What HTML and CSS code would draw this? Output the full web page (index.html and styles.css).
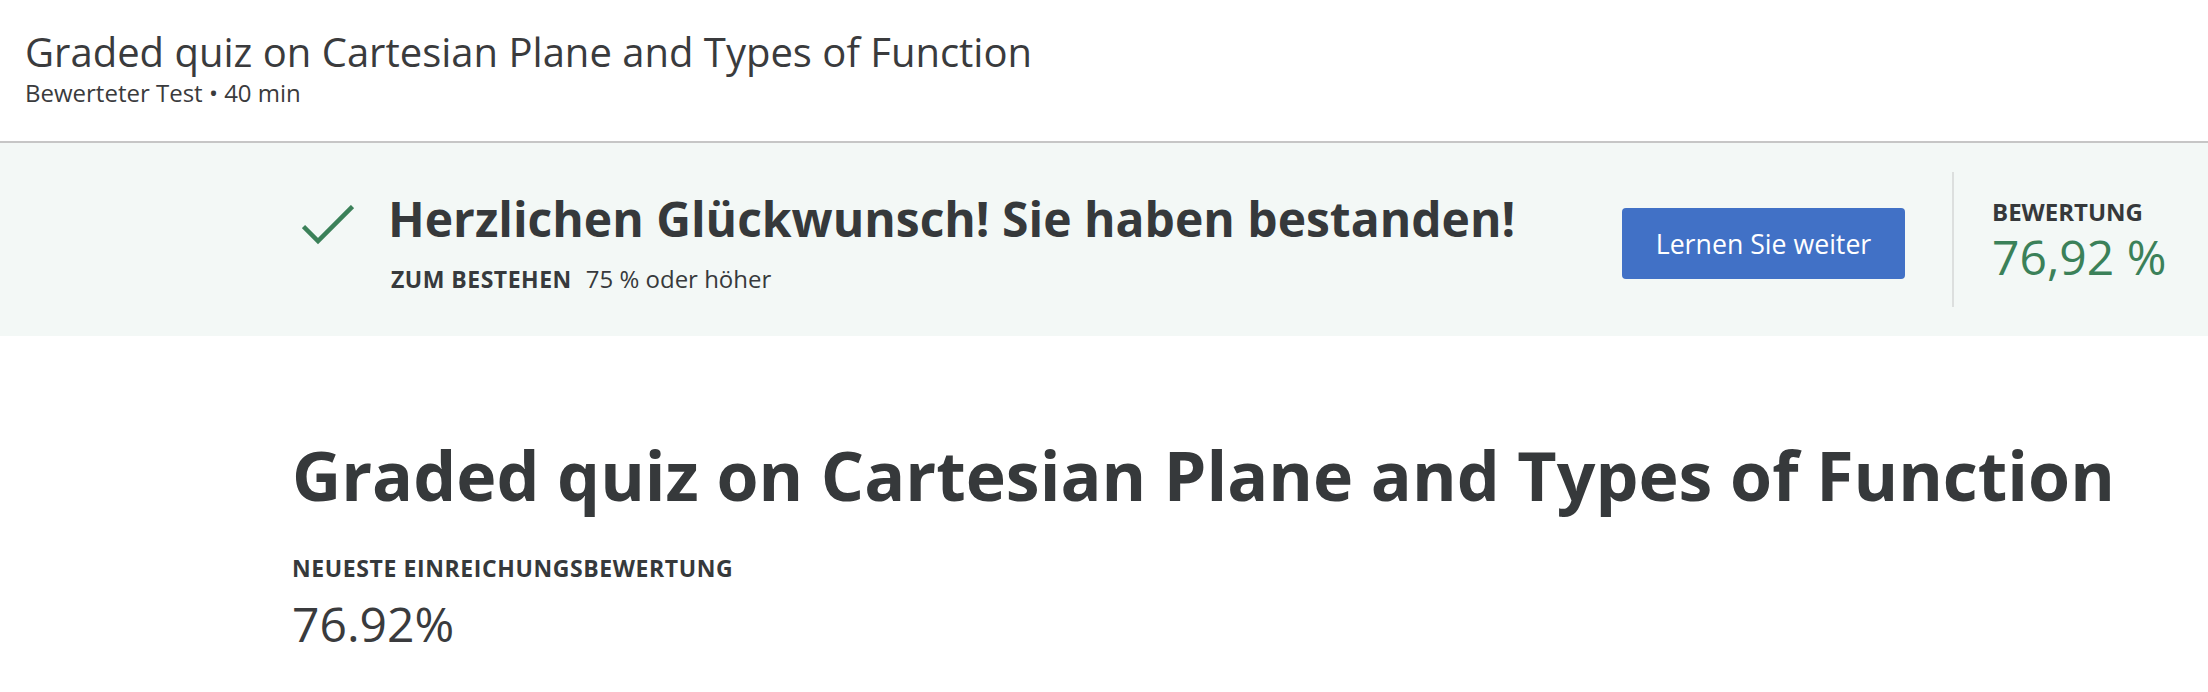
FILE: index.html
```html
<!DOCTYPE html>
<html lang="de">
<head>
<meta charset="utf-8">
<title>Graded quiz on Cartesian Plane and Types of Function</title>
<link rel="stylesheet" href="styles.css">
</head>
<body>
<header class="page-header">
  <h1 class="header-title">Graded quiz on Cartesian Plane and Types of Function</h1>
  <div class="header-sub">Bewerteter Test • 40 min</div>
</header>
<section class="banner">
  <div class="banner-main">
    <svg class="check" width="52" height="40" viewBox="0 0 52 40" aria-hidden="true">
      <path d="M1.5 21.5 L16 36 L50.5 1.5" fill="none" stroke="#3b8159" stroke-width="4.5"/>
    </svg>
    <div class="banner-text">
      <h2 class="banner-title">Herzlichen Glückwunsch! Sie haben bestanden!</h2>
      <div class="banner-pass"><span class="pass-label">ZUM BESTEHEN</span><span class="pass-value">75 % oder höher</span></div>
    </div>
  </div>
  <button class="btn-primary">Lernen Sie weiter</button>
  <div class="divider"></div>
  <div class="score">
    <div class="score-label">BEWERTUNG</div>
    <div class="score-value">76,92 %</div>
  </div>
</section>
<main class="content">
  <h1 class="content-title">Graded quiz on Cartesian Plane and Types of Function</h1>
  <div class="latest-label">NEUESTE EINREICHUNGSBEWERTUNG</div>
  <div class="latest-value">76.92%</div>
</main>
</body>
</html>
```
FILE: styles.css
```css
html, body {
  margin: 0;
  padding: 0;
  background: #ffffff;
  font-family: "Open Sans", "Noto Sans", "Liberation Sans", sans-serif;
  color: #373a3c;
}

.page-header {
  padding: 28px 0 33px 25px;
  border-bottom: 2px solid #c6c6c6;
}

.header-title {
  margin: 0;
  font-size: 40px;
  line-height: 48px;
  font-weight: 400;
  color: #3a3b3d;
}

.header-sub {
  margin-top: 2px;
  font-size: 24px;
  line-height: 30px;
  color: #3a3b3d;
}

.banner {
  display: flex;
  align-items: center;
  height: 193px;
  box-sizing: border-box;
  padding-left: 302px;
  background: #f3f8f6;
}

.banner-main {
  display: flex;
  align-items: flex-start;
  padding-top: 5px;
}

.check {
  display: block;
  margin-top: 14px;
  margin-right: 34px;
  flex: none;
}

.banner-title {
  margin: 0;
  font-size: 48px;
  line-height: 56px;
  font-weight: 700;
  color: #36393b;
}

.banner-pass {
  margin-top: 17px;
  display: flex;
  align-items: baseline;
  gap: 14px;
  padding-left: 3px;
  font-size: 24px;
  line-height: 30px;
}

.pass-label {
  font-size: 23px;
  font-weight: 700;
  letter-spacing: 0.5px;
}

.btn-primary {
  margin-left: auto;
  margin-top: 8px;
  width: 283px;
  height: 71px;
  padding: 0;
  border: none;
  border-radius: 4px;
  background: #4171c6;
  color: #ffffff;
  font-family: inherit;
  font-size: 26.7px;
  font-weight: 500;
  flex: none;
}

.divider {
  width: 2px;
  height: 135px;
  margin-left: 47px;
  background: #dcdfde;
  flex: none;
}

.score {
  margin-left: 38px;
  width: 216px;
  flex: none;
  margin-top: 4px;
}

.score-label {
  font-size: 24px;
  line-height: 30px;
  font-weight: 700;
  color: #36393b;
}

.score-value {
  font-size: 48px;
  line-height: 60px;
  color: #3b8159;
}

.content {
  padding: 97px 0 0 292px;
}

.content-title {
  margin: 0;
  font-size: 68px;
  line-height: 84px;
  font-weight: 700;
  color: #36393b;
}

.latest-label {
  margin-top: 37px;
  font-size: 23px;
  line-height: 28px;
  font-weight: 700;
  letter-spacing: 0.6px;
  color: #36393b;
}

.latest-value {
  margin-top: 12px;
  font-size: 48px;
  line-height: 60px;
  color: #3a3b3d;
}
```
